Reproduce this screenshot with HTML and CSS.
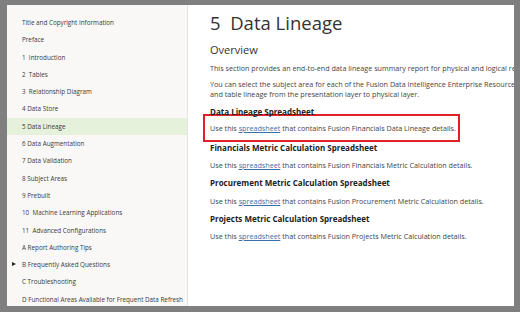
FILE: index.html
```html
<!DOCTYPE html>
<html lang="en">
<head>
    <meta charset="UTF-8">
    <title>5 Data Lineage</title>
    <link rel="stylesheet" href="styles.css">
</head>
<body>

<div class="frame">
    <nav class="toc">
        <a href="#">Title and Copyright Information</a>
        <a href="#">Preface</a>
        <a href="#">1&nbsp; Introduction</a>
        <a href="#">2&nbsp; Tables</a>
        <a href="#">3&nbsp; Relationship Diagram</a>
        <a href="#">4 Data Store</a>
        <a href="#" class="active">5 Data Lineage</a>
        <a href="#">6 Data Augmentation</a>
        <a href="#">7 Data Validation</a>
        <a href="#">8 Subject Areas</a>
        <a href="#">9 Prebuilt</a>
        <a href="#">10&nbsp; Machine Learning Applications</a>
        <a href="#">11&nbsp; Advanced Configurations</a>
        <a href="#">A Report Authoring Tips</a>
        <a href="#" class="has-kids">B Frequently Asked Questions</a>
        <a href="#">C Troubleshooting</a>
        <a href="#">D Functional Areas Available for Frequent Data Refresh</a>
    </nav>

    <main class="content">
        <h1>5&nbsp; Data Lineage</h1>
        <h2>Overview</h2>
        <p>This section provides an end-to-end data lineage summary report for physical and logical relationships in your data warehouse.</p>
        <p>You can select the subject area for each of the Fusion Data Intelligence Enterprise Resource Planning (ERP) modules to view column<br>and table lineage from the presentation layer to physical layer.</p>

        <h3>Data Lineage Spreadsheet</h3>
        <div class="callout">
            <p>Use this <a href="#">spreadsheet</a> that contains Fusion Financials Data Lineage details.</p>
        </div>

        <h3>Financials Metric Calculation Spreadsheet</h3>
        <p>Use this <a href="#">spreadsheet</a> that contains Fusion Financials Metric Calculation details.</p>

        <h3>Procurement Metric Calculation Spreadsheet</h3>
        <p>Use this <a href="#">spreadsheet</a> that contains Fusion Procurement Metric Calculation details.</p>

        <h3>Projects Metric Calculation Spreadsheet</h3>
        <p>Use this <a href="#">spreadsheet</a> that contains Fusion Projects Metric Calculation details.</p>
    </main>
</div>

</body>
</html>
```

FILE: styles.css
```css
body {
    margin: 0;
    font-family: 'Open Sans', sans-serif;
    color: #333;
}

.frame {
    display: flex;
    height: 312px;
    box-sizing: border-box;
    border: 6px solid #7f7f7f;
    border-top-width: 5px;
    border-left-width: 7px;
    background: #fff;
    overflow: hidden;
}

.toc {
    width: 180px;
    flex-shrink: 0;
    display: flex;
    flex-direction: column;
    padding-top: 9px;
    background: #f9f8f6;
    border-right: 1px solid #e6e4e1;
}

.toc a {
    position: relative;
    padding-left: 15px;
    line-height: 17.3px;
    font-size: 6.3px;
    color: #3a3a3a;
    text-decoration: none;
    white-space: nowrap;
}

.toc a.active {
    background: #e6f1dc;
}

.toc a.has-kids::before {
    content: "";
    position: absolute;
    left: 5px;
    top: 6px;
    border-left: 4px solid #222;
    border-top: 2.5px solid transparent;
    border-bottom: 2.5px solid transparent;
}

.content {
    flex: 1;
    min-width: 0;
    padding: 6px 0 0 22px;
    white-space: nowrap;
    overflow: hidden;
}

.content h1 {
    margin: 0 0 7px;
    font-size: 18.5px;
    font-weight: 400;
    line-height: 24px;
    color: #333;
}

.content h2 {
    margin: 0 0 7px;
    font-size: 11px;
    font-weight: 400;
    line-height: 15px;
    color: #333;
}

.content p {
    margin: 0 0 6.5px;
    font-size: 7.2px;
    line-height: 9.5px;
    color: #444;
}

.content h3 {
    margin: 0 0 8.5px;
    font-size: 8px;
    font-weight: 700;
    line-height: 11px;
    color: #222;
}

.content a {
    color: #3b6fa8;
}

.callout {
    margin: -11px 0 -0.5px -7px;
    width: 257px;
    height: 28px;
    border: 2px solid #e2202a;
    padding: 8px 0 0 5px;
    box-sizing: border-box;
}

.callout p {
    margin: 0;
}
```
